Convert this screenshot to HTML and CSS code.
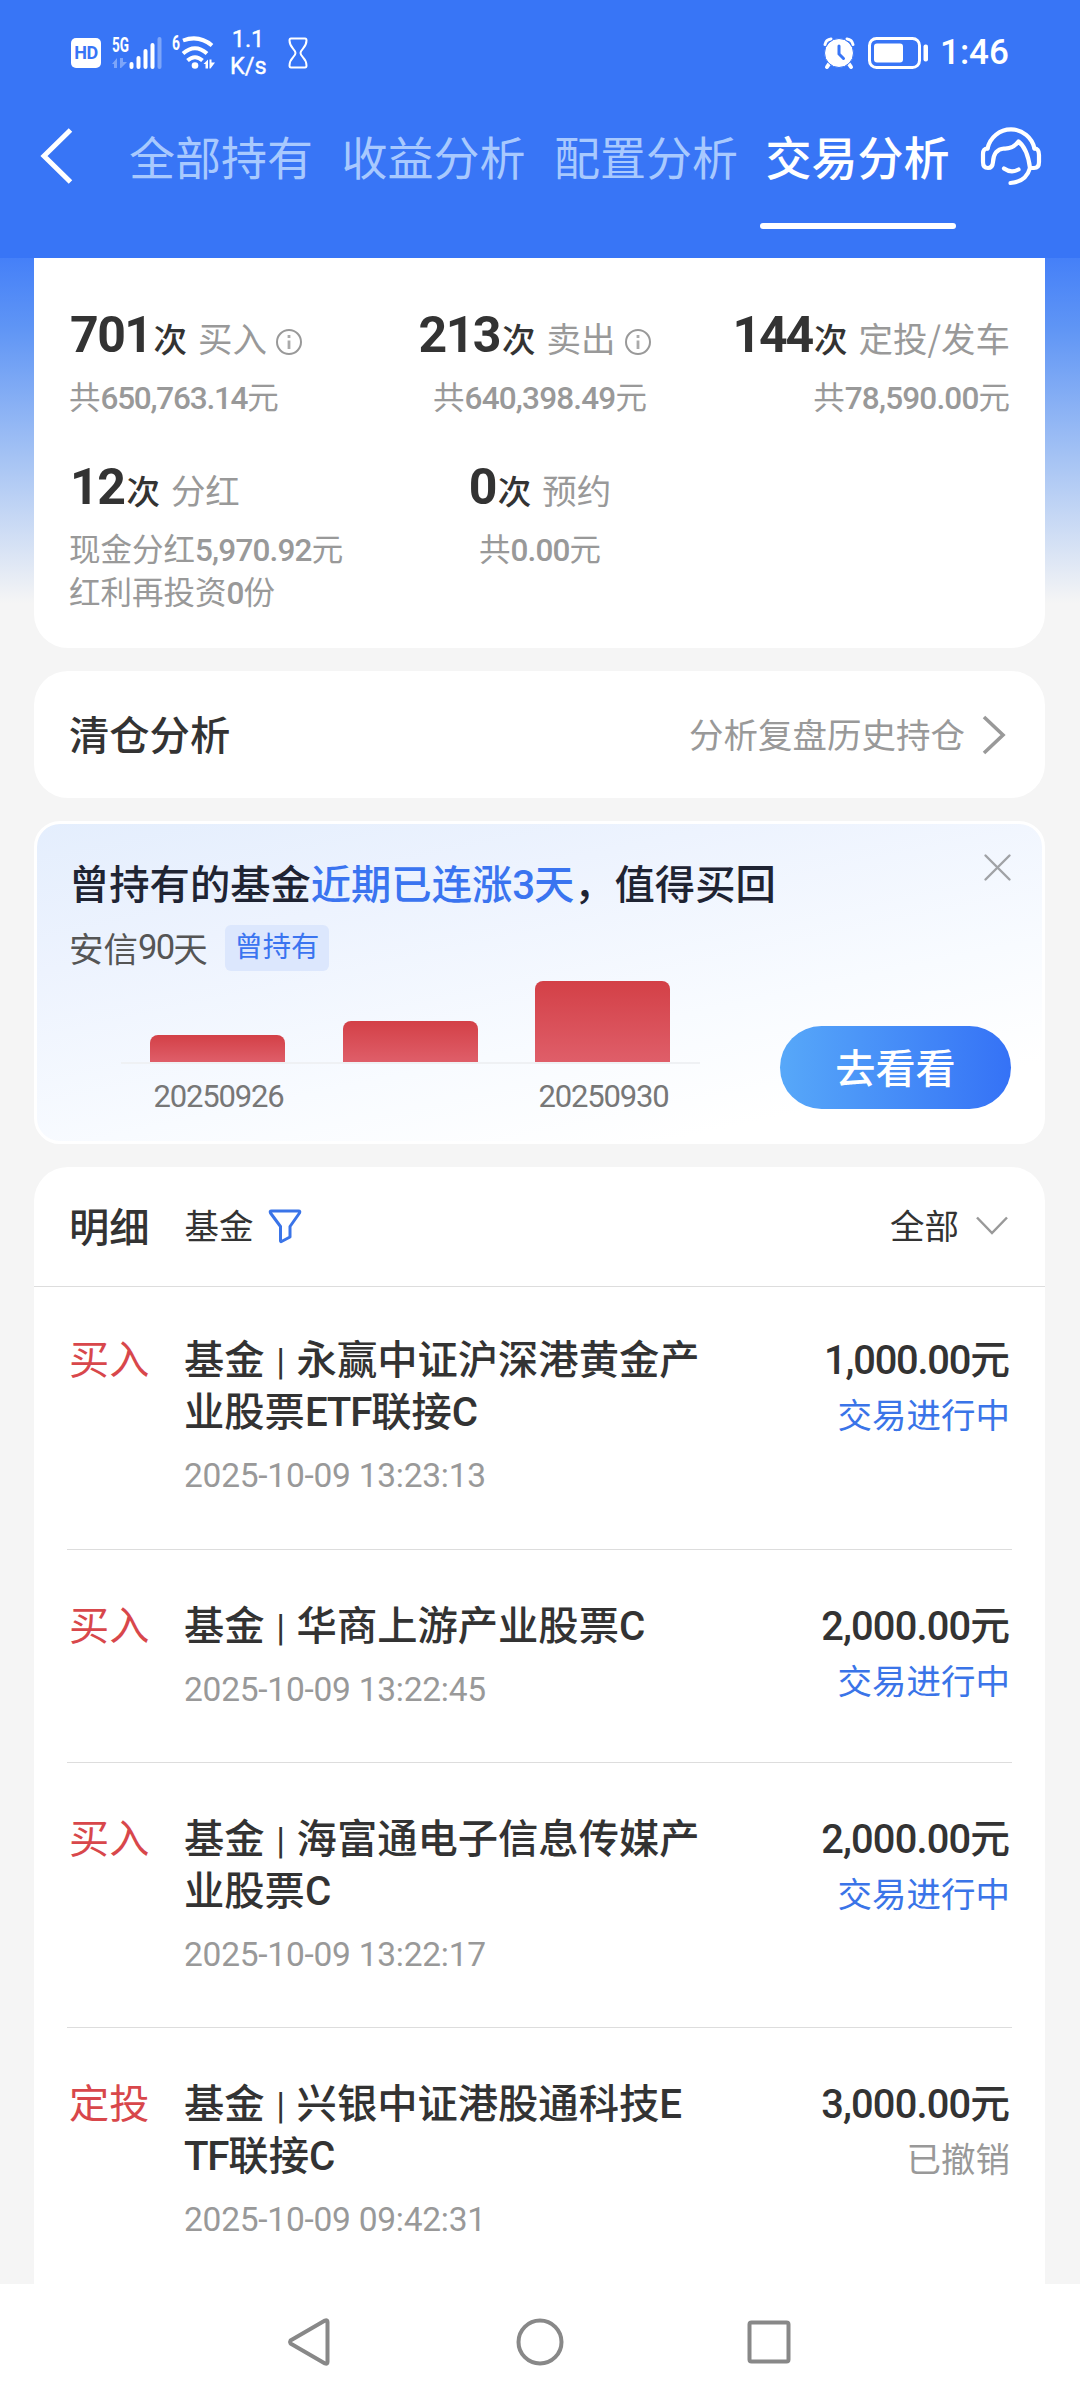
FILE: index.html
```html
<!DOCTYPE html>
<html lang="zh-CN">
<head>
<meta charset="utf-8">
<title>交易分析</title>
<link rel="stylesheet" href="styles.css">
</head>
<body>
<div class="screen">
  <header class="header">
    <div class="status">
      <span class="hd">HD</span>
      <svg class="signal" width="50" height="32" viewBox="0 0 50 32" fill="#fff">
        <text x="0" y="14.500" class="net" textLength="17" lengthAdjust="spacingAndGlyphs">5G</text>
        <g opacity=".35"><path d="M0 27l5-6v10h-3v-4zM8 21h3v4h4l-6 6h-1z"/><rect x="45.500" y="0" width="4" height="32" rx="2"/></g>
        <rect x="17.500" y="25" width="4" height="7" rx="2"/><rect x="24.500" y="19" width="4" height="13" rx="2"/><rect x="31.500" y="12" width="4" height="20" rx="2"/><rect x="38.500" y="6" width="4" height="26" rx="2"/>
      </svg>
      <svg class="wifi" width="44" height="33" viewBox="0 0 44 33" fill="none" stroke="#fff" stroke-width="4">
        <text x="0" y="14" class="net" textLength="8" lengthAdjust="spacingAndGlyphs" fill="#fff" stroke="none">6</text>
        <path d="M11 4.500Q27-1.500 40 9.500M11 17.500Q23 7 35 17.500M15.500 24.500Q23 18 30.500 24.500"/>
        <circle cx="23" cy="29.500" r="3.300" fill="#fff" stroke="none"/>
        <path d="M31.500 28l4.500-4.500v9h-2.500V28zM37.500 23.500h2v3h3.500l-4.500 6h-1z" fill="#fff" stroke="none"/>
      </svg>
      <div class="speed"><span>1.1</span><span>K/s</span></div>
      <svg class="glass" width="20" height="32" viewBox="0 0 20 32" fill="none" stroke="#fff" stroke-width="2">
        <path d="M3 1.500h14q1.500 0 1.500 2C18.500 11 12.500 12 12.500 16s6 5 6 12.500q0 2-1.500 2H3q-1.500 0-1.500-2C1.500 21 7.500 20 7.500 16s-6-5-6-12.500q0-2 1.500-2z"/>
      </svg>
      <svg class="alarm" width="32" height="32" viewBox="0 0 32 32">
        <g fill="none" stroke="#fff" stroke-linecap="round"><path stroke-width="3" d="M2 7.500q1-5 6-5.500M30 7.500q-1-5-6-5.500"/><path stroke-width="4" d="M6 27l-2 3M26 27l2 3"/></g>
        <circle cx="16" cy="16" r="14.500" fill="#fff" stroke="#3875f6" stroke-width="1"/><path d="M16 9v8l4.500 4.500" fill="none" stroke="#3875f6" stroke-width="3" stroke-linecap="round"/>
      </svg>
      <svg class="battery" width="61" height="32" viewBox="0 0 61 32" fill="none">
        <rect x="1.500" y="1.500" width="50" height="29" rx="7" stroke="#fff" stroke-width="3"/>
        <rect x="6" y="6.500" width="29" height="19" rx="3" fill="#fff"/><rect x="55.500" y="7.500" width="4.500" height="17" rx="2" fill="#fff"/>
      </svg>
      <span class="time">1:46</span>
    </div>
    <nav class="tabs">
      <svg class="back" width="34" height="54" viewBox="0 0 34 54" fill="none" stroke="#fff" stroke-width="5"><path d="M30.500 1L4 27l26.500 26"/></svg>
      <span class="tab">全部持有</span>
      <span class="tab">收益分析</span>
      <span class="tab">配置分析</span>
      <span class="tab active">交易分析</span>
      <svg class="service" width="62" height="60" viewBox="0 0 62 60" fill="none" stroke="#fff" stroke-width="4.200" stroke-linecap="round" stroke-linejoin="round">
        <path d="M7.500 22.500A24 24 0 0 1 54.500 22.500"/>
        <path d="M7.500 22.500Q3 22.500 3 28v8q0 6 5 6 4.500 0 5-6C13.500 27 18 23 24 22.500q9 .5 14.500-7 9 7 11.500 26.500h4Q59 42 59 36v-7q0-6.500-4.500-6.500"/>
        <path d="M50 42Q46 56 30.500 57M24 42.500q7 5 14.500 1"/>
      </svg>
    </nav>
  </header>

  <main class="content">
    <section class="card summary">
      <div class="stat start">
        <div class="head"><b>701</b><i>次</i><span>买入</span><svg class="info" width="28" height="28" viewBox="0 0 28 28"><circle cx="14" cy="14" r="12" fill="none" stroke="#999" stroke-width="2"/><path d="M14 12.500v8.500M14 7v3" stroke="#aaa" stroke-width="2.800"/></svg></div>
        <p>共<span class="num tight">650,763.14</span>元</p>
      </div>
      <div class="stat middle">
        <div class="head shifted"><b>213</b><i>次</i><span>卖出</span><svg class="info" width="28" height="28" viewBox="0 0 28 28"><circle cx="14" cy="14" r="12" fill="none" stroke="#999" stroke-width="2"/><path d="M14 12.500v8.500M14 7v3" stroke="#aaa" stroke-width="2.800"/></svg></div>
        <p>共<span class="num">640,398.49</span>元</p>
      </div>
      <div class="stat end">
        <div class="head"><b>144</b><i>次</i><span>定投/发车</span></div>
        <p>共<span class="num">78,590.00</span>元</p>
      </div>
      <div class="stat start">
        <div class="head"><b>12</b><i>次</i><span>分红</span></div>
        <p>现金分红<span class="num">5,970.92</span>元</p>
        <p>红利再投资<span class="num">0</span>份</p>
      </div>
      <div class="stat middle">
        <div class="head"><b>0</b><i>次</i><span>预约</span></div>
        <p>共<span class="num">0.00</span>元</p>
      </div>
    </section>

    <section class="card clearance">
      <h2>清仓分析</h2>
      <span class="hint">分析复盘历史持仓</span>
      <svg width="26" height="36" viewBox="0 0 26 36" fill="none" stroke="#999" stroke-width="3.600"><path d="M2 0l19 18L2 36"/></svg>
    </section>

    <section class="card promo">
      <div class="promo-top">
        <h2>曾持有的基金<em>近期已连涨<span class="num">3</span>天</em>，值得买回</h2>
        <svg class="close" width="27" height="27" viewBox="0 0 27 27" stroke="#a0a2a6" stroke-width="2.400" stroke-linecap="round"><path d="M1.500 1.500l24 24M25.500 1.500l-24 24"/></svg>
      </div>
      <div class="fund">安信<span class="num">90</span>天<span class="tag">曾持有</span></div>
      <div class="promo-bottom">
        <div class="chart">
          <div class="bars"><div style="height:27px"></div><div style="height:41px"></div><div style="height:81px"></div></div>
          <div class="labels"><span>20250926</span><span></span><span>20250930</span></div>
        </div>
        <a class="button">去看看</a>
      </div>
    </section>

    <section class="card list">
      <div class="list-head">
        <h2>明细</h2>
        <span class="kind">基金</span>
        <svg class="filter" width="34" height="34" viewBox="0 0 34 34" fill="none" stroke="#3a74e8" stroke-width="3" stroke-linejoin="round"><path d="M3.500 2h27q2 0 1 2L22 17.500V28l-8.500 4.500q-1 .5-1-1v-14L2.500 4q-1-2 1-2z"/></svg>
        <span class="all">全部</span>
        <svg class="down" width="32" height="20" viewBox="0 0 32 20" fill="none" stroke="#999" stroke-width="2.500"><path d="M1 1.500l15 15.500 15-15.500"/></svg>
      </div>
      <article class="row">
        <span class="type">买入</span>
        <div class="desc"><h3>基金<span class="bar">|</span>永赢中证沪深港黄金产<br>业股票<span class="num">ETF</span>联接<span class="num">C</span></h3><time>2025-10-09 13:23:13</time></div>
        <div class="money"><strong><span class="num">1,000.00</span>元</strong><span class="state">交易进行中</span></div>
      </article>
      <article class="row">
        <span class="type">买入</span>
        <div class="desc"><h3>基金<span class="bar">|</span>华商上游产业股票<span class="num">C</span></h3><time>2025-10-09 13:22:45</time></div>
        <div class="money"><strong><span class="num wide">2,000.00</span>元</strong><span class="state">交易进行中</span></div>
      </article>
      <article class="row">
        <span class="type">买入</span>
        <div class="desc"><h3>基金<span class="bar">|</span>海富通电子信息传媒产<br>业股票<span class="num">C</span></h3><time>2025-10-09 13:22:17</time></div>
        <div class="money"><strong><span class="num wide">2,000.00</span>元</strong><span class="state">交易进行中</span></div>
      </article>
      <article class="row">
        <span class="type">定投</span>
        <div class="desc"><h3>基金<span class="bar">|</span>兴银中证港股通科技<span class="num">E</span><br><span class="num">TF</span>联接<span class="num">C</span></h3><time>2025-10-09 09:42:31</time></div>
        <div class="money"><strong><span class="num wide">3,000.00</span>元</strong><span class="state done">已撤销</span></div>
      </article>
    </section>
  </main>

  <footer class="navbar">
    <svg width="46" height="50" viewBox="0 0 46 50" fill="none" stroke="#888" stroke-width="4" stroke-linejoin="round"><path d="M3.500 23.500q-1 1.500 0 3L38 46.500q2.500 1 2.500-1.500V5q0-2.500-2.500-1.500z"/></svg>
    <svg width="48" height="48" viewBox="0 0 48 48" fill="none" stroke="#888" stroke-width="4"><circle cx="24" cy="24" r="21.500"/></svg>
    <svg width="44" height="44" viewBox="0 0 44 44" fill="none" stroke="#888" stroke-width="4"><rect x="2.500" y="2.500" width="39" height="39" rx="2"/></svg>
  </footer>
</div>
</body>
</html>
```

FILE: styles.css
```css
* { box-sizing: border-box; margin: 0; padding: 0; }
body {
  width: 1080px;
  font-family: "Noto Sans CJK SC", sans-serif;
  font-size: 34.5px;
  color: #333;
  background: #f5f5f5;
}
svg { display: block; flex: none; overflow: visible; }
h2, h3 { font-size: 40.3px; font-weight: 500; white-space: nowrap; }
em, i { font-style: normal; }
.num { font-family: Roboto, sans-serif; font-weight: inherit; line-height: 0; letter-spacing: -0.03em; }
.num.wide { letter-spacing: -0.021em; }
.screen { width: 1080px; height: 2400px; display: flex; flex-direction: column; overflow: hidden; }

/* header */
.header { height: 258px; flex: none; background: #3875f6; color: #fff; }
.status { display: flex; align-items: center; height: 105px; padding: 0 72px 0 71px; font-family: Roboto, sans-serif; }
.hd { width: 30px; height: 30px; border-radius: 5px; background: #fff; color: #3875f6; font-size: 18px; line-height: 30px; font-weight: 700; text-align: center; letter-spacing: -0.5px; margin-top: 1px; }
.net { font: 700 20px Roboto, sans-serif; }
.signal { margin-left: 11px; }
.wifi { margin-left: 10px; }
.speed { display: flex; flex-direction: column; width: 36px; margin: 1px 0 0 14px; font-size: 23.500px; line-height: 27px; font-weight: 400; text-align: center; -webkit-text-stroke: 0.4px #fff; }
.glass { margin-left: 22px; }
.alarm { margin-left: auto; }
.battery { margin-left: 13px; }
.time { margin-left: 11px; width: 68px; font-size: 35px; font-weight: 500; line-height: 40px; white-space: nowrap; }
.tabs { display: flex; height: 124px; padding-left: 40px; align-items: stretch; }
.back { margin: 24px 55px 0 0; }
.tab { width: 184px; margin-right: 28.500px; font-size: 46px; line-height: 100px; color: #a8c9fe; white-space: nowrap; }
.tab.active { width: 196px; margin: 0 24px 0 -7px; color: #fff; font-weight: 500; display: flex; flex-direction: column; align-items: center; }
.tab.active::after { content: ""; width: 196px; height: 6px; border-radius: 3px; background: #fff; margin-top: 18px; }
.service { margin-top: 21px; }

/* content */
.content { height: 2026px; padding: 0 35px 0 34px; display: flex; flex-direction: column; gap: 23px; background: linear-gradient(#4580f8 0, #5f95f5 70px, #a5c3f4 200px, #f5f5f5 345px); overflow: hidden; }
.card { background: #fff; border-radius: 34px; flex: none; }
.summary { height: 390px; border-radius: 0 0 34px 34px; padding: 42px 35px 0 36px; display: grid; grid-template-columns: 313px 314px 313px; grid-template-rows: 152px 170px; }
.stat { white-space: nowrap; color: #999; }
.head { display: flex; align-items: baseline; height: 74px; line-height: 70px; }
.head b { font: 700 50px/70px Roboto, sans-serif; letter-spacing: -1.500px; color: #333; margin-right: 2px; }
.head i { color: #333; font-weight: 500; font-size: 33.500px; margin-right: 11px; }
.info { align-self: center; margin: 9px 0 0 8px; }
.stat p { font-size: 31.500px; line-height: 43px; }
.stat p .num { font-weight: 500; letter-spacing: -0.026em; }
.start p { margin-left: -1px; }
.stat p .tight { letter-spacing: -0.039em; }
.middle { display: flex; flex-direction: column; align-items: center; }
.shifted { padding-right: 10px; }
.end { display: flex; flex-direction: column; align-items: flex-end; }
.end b { letter-spacing: -2.200px; }
.clearance { height: 127px; display: flex; align-items: center; padding: 0 37px 0 35px; }
.clearance h2, .hint { padding-bottom: 4px; }
.hint { margin-left: auto; margin-right: 17px; color: #999; }

/* buy-back card */
.promo { height: 323px; border: 3px solid #fff; border-radius: 26px; background: linear-gradient(168deg, #e4eefd 0, #edf3fe 28%, #f8fbff 62%, #fff 85%); padding: 30px 31px 0 32px; }
.promo-top { display: flex; justify-content: space-between; align-items: flex-start; height: 67px; line-height: 55px; color: #1f2433; }
.promo-top em { color: #3a74f0; }
.fund { display: flex; align-items: center; height: 51px; color: #555; white-space: nowrap; }
.fund .num { letter-spacing: -0.05em; }
.tag { margin: 2px 0 0 17px; width: 104px; height: 46px; border-radius: 6px; background: #dce7fd; color: #3a74f0; font-size: 28.300px; line-height: 40px; text-align: center; }
.promo-bottom { display: flex; justify-content: space-between; }
.chart { width: 579px; margin-left: 52px; margin-top: 10px; }
.bars { display: flex; align-items: flex-end; gap: 57.500px; height: 82px; padding-left: 29px; border-bottom: 2px solid #eff1f4; }
.bars div { width: 135px; border-radius: 8px 8px 0 0; background: linear-gradient(#d34047, #df5e69); }
.labels { display: flex; gap: 57.500px; padding-left: 30px; font: 400 31px/66px Roboto, sans-serif; letter-spacing: -1.150px; color: #777; }
.labels span { width: 135px; text-align: center; }
.button { width: 231px; height: 83px; margin-top: 54px; border-radius: 42px; background: linear-gradient(90deg, #57a8f9, #3572f6); color: #fff; font-size: 40.200px; font-weight: 500; line-height: 80px; text-align: center; }

/* transactions */
.list { height: 1200px; }
.list-head { display: flex; align-items: center; height: 120px; padding: 0 37px 1px 35px; border-bottom: 1px solid #ddd; }
.list-head h2, .kind, .all { padding-bottom: 4px; }
.kind { margin-left: 35px; }
.filter { margin-left: 14px; }
.all { margin-left: auto; margin-right: 17px; }
.row { display: flex; margin: 0 33px; padding: 47px 2px 52px; border-bottom: 1px solid #ddd; }
.list-head + .row { padding-top: 44px; padding-bottom: 53px; }
.type { width: 115px; font-size: 40.200px; line-height: 52px; color: #d8474b; }
.desc { flex: 1; }
h3 { line-height: 52px; }
h3 .bar { font-family: Roboto, sans-serif; font-weight: 400; font-size: 36px; line-height: 0; display: inline-block; width: 32px; text-align: center; }
time { display: block; margin-top: 21px; font: 400 33.500px/40px Roboto, sans-serif; color: #999; letter-spacing: -0.250px; }
.money { display: flex; flex-direction: column; align-items: flex-end; white-space: nowrap; }
.money strong { font-size: 39.800px; line-height: 52px; font-weight: 500; }
.state { color: #3a74e8; line-height: 61px; }
.state.done { color: #999; }

/* system navigation */
.navbar { height: 116px; flex: none; background: #fff; display: flex; align-items: center; padding-left: 287px; gap: 183px; }
```
